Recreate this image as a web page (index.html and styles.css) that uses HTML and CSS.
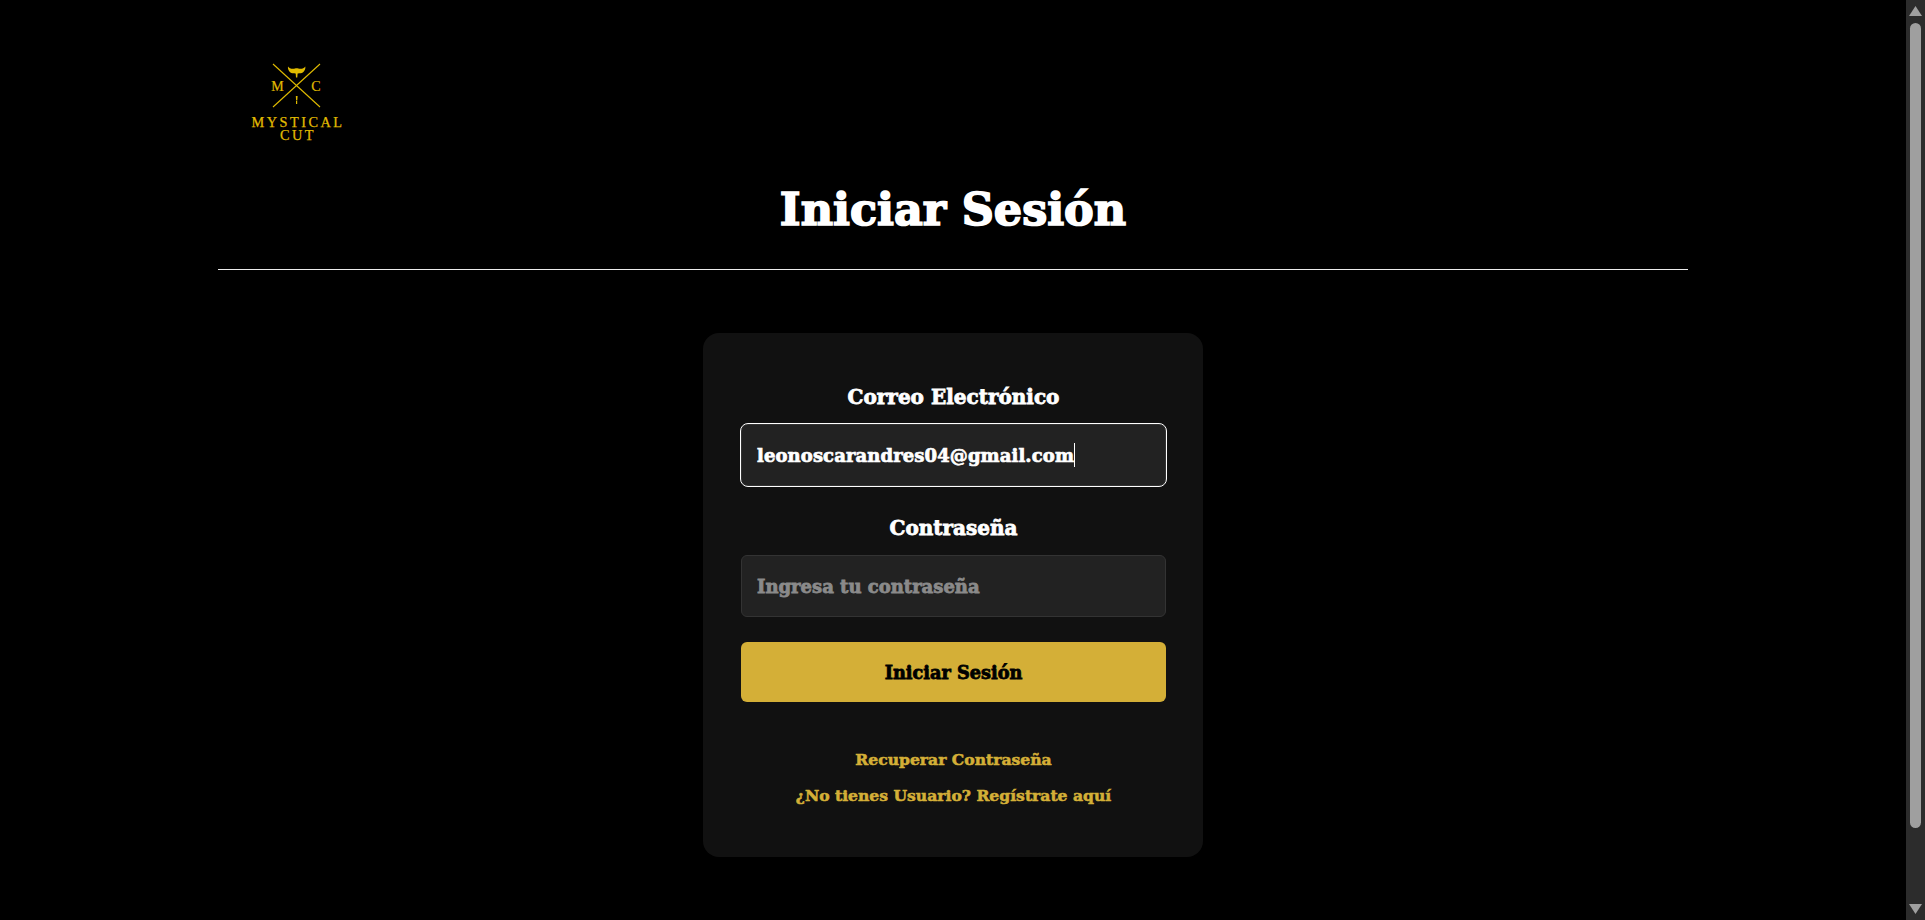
FILE: index.html
```html
<!DOCTYPE html>
<html lang="es">
<head>
<meta charset="utf-8">
<title>Iniciar Sesión</title>
<link rel="stylesheet" href="styles.css">
</head>
<body>
<div class="page">
  <header class="top">
    <svg class="logo" width="100" height="86" viewBox="0 0 100 86" aria-label="Mystical Cut">
      <g class="logo-lines">
        <line x1="23" y1="6" x2="70" y2="49"/>
        <line x1="70" y1="6" x2="23" y2="49"/>
      </g>
      <path class="logo-fill" d="M38 8.500C37.500 11.500 39.500 14.800 42.500 15.200 44 15.400 45 15.200 45.700 15.600L46 19.500h1.300L47.600 15.600C48.300 15.200 49.300 15.400 50.800 15.200 53.800 14.800 55.800 11.500 55.300 8.500 54.300 10 52.500 10.800 50.500 10.800 48.800 10.800 47.700 10.200 46.650 10.200 45.600 10.200 44.500 10.800 42.800 10.800 40.800 10.800 39 10 38 8.500Z"/>
      <path class="logo-fill" d="M45.800 38h1.800l-.3 4.500h-1.200zM46 43h1.200v3h-1.200z"/>
      <text class="logo-big" x="27.500" y="33" text-anchor="middle">M</text>
      <text class="logo-big" x="66" y="33" text-anchor="middle">C</text>
      <text class="logo-name" x="48" y="69" text-anchor="middle">MYSTICAL</text>
      <text class="logo-name" x="48" y="82" text-anchor="middle">CUT</text>
    </svg>
  </header>
  <h1 class="title">Iniciar Sesión</h1>
  <hr class="rule">
  <main class="card">
    <form class="form">
      <label class="label">Correo Electrónico</label>
      <div class="field field-focus"><span class="value">leonoscarandres04@gmail.com</span><span class="caret"></span></div>
      <label class="label label-second">Contraseña</label>
      <div class="field"><span class="placeholder">Ingresa tu contraseña</span></div>
      <button class="submit" type="button">Iniciar Sesión</button>
    </form>
    <nav class="links">
      <a class="link" href="#">Recuperar Contraseña</a>
      <a class="link" href="#">¿No tienes Usuario? Regístrate aquí</a>
    </nav>
  </main>
</div>
<div class="scrollbar" aria-hidden="true">
  <svg class="arrow" width="19" height="21" viewBox="0 0 19 21"><path d="M9.500 6 16 16H3z"/></svg>
  <div class="thumb"></div>
  <svg class="arrow arrow-end" width="19" height="21" viewBox="0 0 19 21"><path d="M3 5h13l-6.500 10z"/></svg>
</div>
</body>
</html>
```
FILE: styles.css
```css
* { box-sizing: border-box; }
html { background: #000; }
body {
  margin: 0;
  padding-right: 19px;
  background: #000;
  color: #fff;
  font-family: "DejaVu Serif", serif;
  font-weight: 700;
}
.page { width: 1470px; margin: 0 auto; height: 1004px; display: flex; flex-direction: column; align-items: stretch; }
.top { padding: 58px 0 0 32px; height: 146px; }
.logo { display: block; }
.logo-lines line { stroke: #e0bb00; stroke-width: 1.100; }
.logo-fill { fill: #e0bb00; }
.logo-big { fill: #e0bb00; stroke: #e0bb00; stroke-width: .2px; font: 400 14px "Liberation Serif", serif; }
.logo-name { fill: #e0bb00; stroke: #e0bb00; stroke-width: .25px; font: 400 14.300px "Liberation Serif", serif; letter-spacing: 2.500px; }
.title { margin: 30px 0 0; font-size: 44.500px; line-height: 66px; text-align: center; font-weight: 700; -webkit-text-stroke: 1.700px #fff; }
.rule { width: 100%; margin: 27px 0 0; border: 0; border-top: 1px solid #ececec; }
.card {
  width: 500px;
  margin: 63px auto 0;
  padding: 49px 37px 49px 38px;
  background: #111;
  border-radius: 16px;
}
.form { display: flex; flex-direction: column; }
.label { text-align: center; font-size: 20px; line-height: 30px; margin-bottom: 12px; -webkit-text-stroke: .8px #fff; }
.label-second { margin-top: 27px; }
.field {
  height: 62px;
  padding: 0 15px;
  background: #222;
  border: 1px solid #333;
  border-radius: 6px;
  display: flex;
  align-items: center;
  font-size: 18px;
}
.field-focus { outline: 1px solid #fff; border-radius: 7px; }
.value { color: #fff; letter-spacing: .1px; -webkit-text-stroke: .7px #fff; }
.caret { display: block; width: 1px; height: 24px; background: #fff; }
.placeholder { color: #8a8a8a; -webkit-text-stroke: .8px #8a8a8a; }
.submit {
  height: 60px;
  margin-top: 25px;
  background: #d4af37;
  color: #000;
  border: 0;
  border-radius: 6px;
  font: 700 17.700px "DejaVu Serif", serif;
  -webkit-text-stroke: .8px #000;
}
.links { margin-top: 46px; display: flex; flex-direction: column; align-items: center; gap: 12px; }
.link { color: #d4af37; font-size: 15.600px; line-height: 24px; text-decoration: none; -webkit-text-stroke: .55px #d4af37; }
.scrollbar {
  position: fixed;
  top: 0;
  right: 0;
  bottom: 0;
  width: 19px;
  background: #2c2c2c;
  display: flex;
  flex-direction: column;
  align-items: center;
}
.arrow { display: block; flex: none; fill: #9f9f9f; }
.thumb { width: 11px; height: 805px; margin-top: 2px; background: #9f9f9f; border-radius: 6px; }
.arrow-end { margin-top: auto; }
```
